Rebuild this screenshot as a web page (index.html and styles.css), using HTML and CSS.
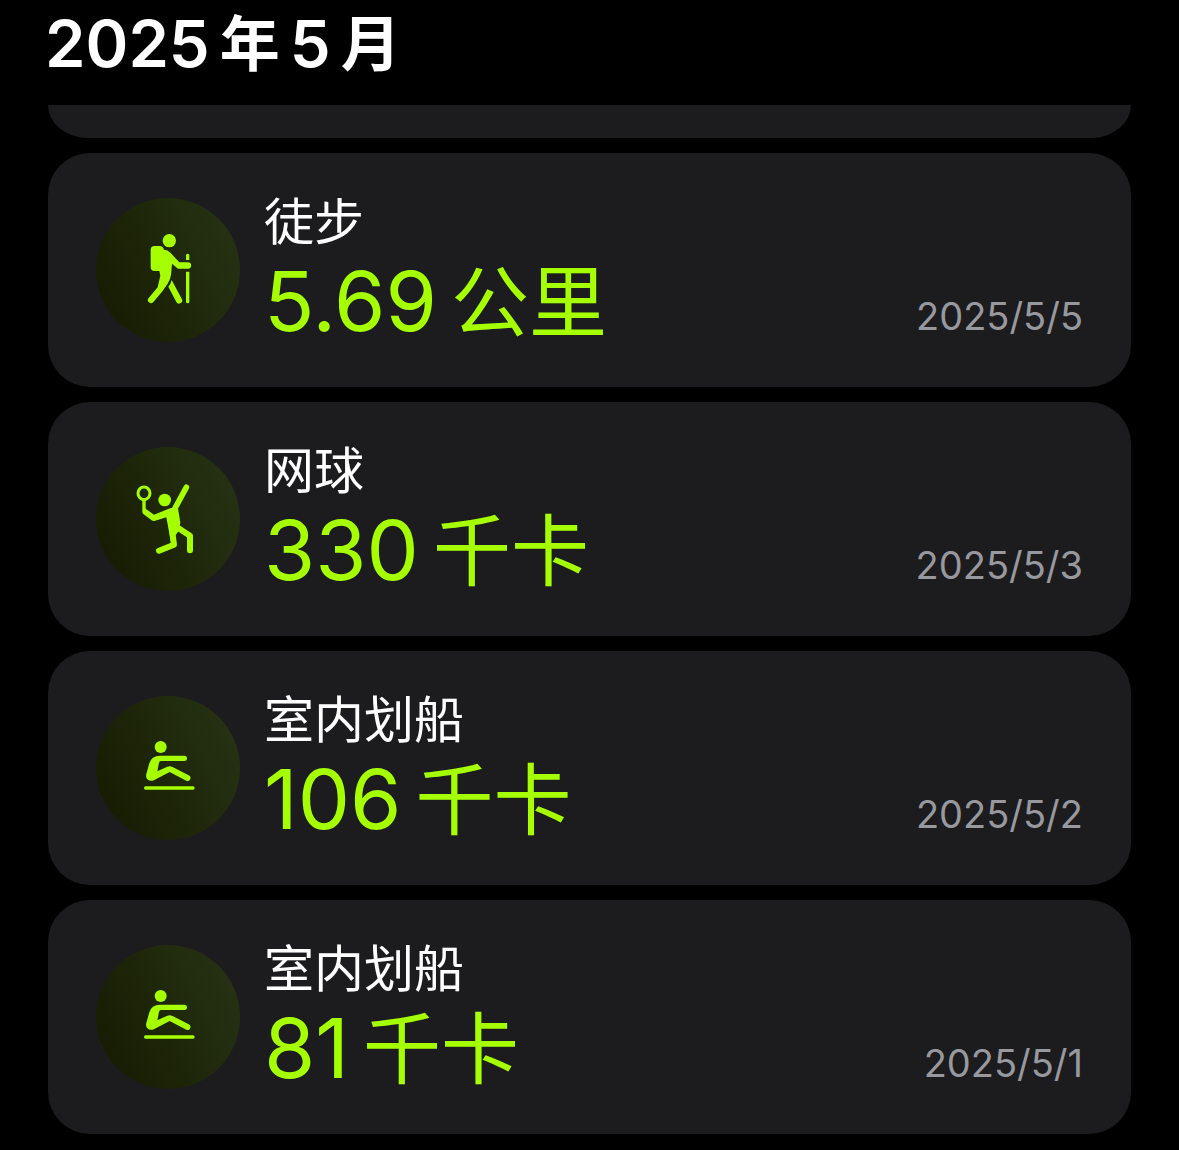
FILE: index.html
```html
<!DOCTYPE html>
<html lang="zh-CN">
<head>
<meta charset="utf-8">
<meta name="viewport" content="width=device-width, initial-scale=1">
<title>2025年5月</title>
<link rel="stylesheet" href="styles.css">
</head>
<body>
<svg class="sprite" aria-hidden="true">
  <symbol id="rower" viewBox="18 18 432 432">
    <circle cx="212" cy="171" r="18"/>
    <path d="M210 197H283A8 8 0 0 1 283 213H213Q208 213 207 218L202 244L232 230Q239 227 246 230L296 256A8 8 0 0 1 289 272L239 246L193 270Q181 276 172 268Q167 263 169 252L178 220Q184 198 210 197Z"/>
    <rect x="162" y="289" width="152" height="10" rx="5"/>
  </symbol>
</svg>
<header class="month">
  <h1 class="month-title"><span>2025</span><span>年</span><span>5</span><span>月</span></h1>
</header>
<main class="workouts">
  <div class="card card-clipped"></div>
  <article class="card">
    <div class="badge">
      <svg class="icon" viewBox="18 24 432 432" aria-hidden="true">
        <circle cx="238" cy="152" r="20"/>
        <path d="M194 168H209Q219 168 222 179Q233 179 242 189L268 217H294A9 9 0 0 1 294 236H264L246 221L243 255Q241 269 233 281L216 305L190 336A9 9 0 0 1 176 324L203 292L211 257L208 243H194Q182 243 182 231V180Q182 168 194 168Z"/>
        <path d="M245 270L275 326A9 9 0 0 1 259 336L235 290Q242 282 245 270Z"/>
        <path d="M288 210V196A5 5 0 0 1 298 196V210ZM288 245H298V335A5 5 0 0 1 288 335Z"/>
      </svg>
    </div>
    <div class="summary">
      <h2 class="name">徒步</h2>
      <p class="value"><span>5.69</span><span class="unit">公里</span></p>
    </div>
    <time class="date" datetime="2025-05-05">2025/5/5</time>
  </article>
  <article class="card">
    <div class="badge">
      <svg class="icon" viewBox="18 21 432 432" aria-hidden="true">
        <circle cx="224" cy="180" r="19"/>
        <ellipse class="line racket" cx="162" cy="160" rx="18" ry="19"/>
        <path d="M157 178H167V206L192 224L242 204L264 205L271 248L266 272L243 306L229 232L193 243Q189 244 185 241L160 222Q157 219 157 215Z"/>
        <path class="line" d="M253 208L256 203L289 142"/>
        <path class="line limb" d="M241 234L252 314L207 332M261 262L300 287V331"/>
      </svg>
    </div>
    <div class="summary">
      <h2 class="name">网球</h2>
      <p class="value"><span>330</span><span class="unit">千卡</span></p>
    </div>
    <time class="date" datetime="2025-05-03">2025/5/3</time>
  </article>
  <article class="card">
    <div class="badge">
      <svg class="icon" aria-hidden="true"><use href="#rower"/></svg>
    </div>
    <div class="summary">
      <h2 class="name">室内划船</h2>
      <p class="value"><span>106</span><span class="unit">千卡</span></p>
    </div>
    <time class="date" datetime="2025-05-02">2025/5/2</time>
  </article>
  <article class="card">
    <div class="badge">
      <svg class="icon" aria-hidden="true"><use href="#rower"/></svg>
    </div>
    <div class="summary">
      <h2 class="name">室内划船</h2>
      <p class="value"><span>81</span><span class="unit">千卡</span></p>
    </div>
    <time class="date" datetime="2025-05-01">2025/5/1</time>
  </article>
</main>
</body>
</html>
```
FILE: styles.css
```css
* {
  box-sizing: border-box;
  margin: 0;
}

body {
  background: #000;
  color: #fff;
  font-family: Inter, "Noto Sans CJK SC", sans-serif;
}

.sprite {
  display: none;
}

.month {
  padding: 0 45px 17px;
}

.month-title {
  display: flex;
  gap: 10px;
  font-size: 65px;
  font-weight: 600;
  line-height: 88px;
}

.month-title span:nth-child(even) {
  font-size: 60px;
  font-weight: 700;
}

.workouts {
  display: flex;
  flex-direction: column;
  gap: 15px;
  padding: 0 48px 16px;
}

.card {
  display: flex;
  align-items: center;
  gap: 24px;
  padding: 36px 48px;
  border-radius: 42px;
  background: #1c1c1e;
}

.card-clipped {
  padding: 0;
  height: 33px;
  border-radius: 0 0 40px 40px / 0 0 33px 33px;
}

.badge {
  flex: none;
  width: 144px;
  height: 144px;
  border-radius: 50%;
  background: linear-gradient(65deg, #171c02 10%, #263213 90%);
}

.icon {
  display: block;
  width: 100%;
  height: 100%;
  fill: #a6ff00;
}

.line {
  fill: none;
  stroke: #a6ff00;
  stroke-width: 17px;
  stroke-linecap: round;
  stroke-linejoin: round;
}

.racket {
  stroke-width: 9px;
}

.limb {
  stroke-width: 18px;
}

.summary {
  flex: 1;
  padding-top: 2px;
}

.name {
  font-size: 50px;
  font-weight: 400;
  line-height: 62px;
}

.value {
  display: flex;
  gap: 14px;
  color: #a6ff00;
  font-size: 83px;
  line-height: 96px;
}

.unit {
  padding-top: 2px;
  font-size: 78px;
}

.date {
  align-self: flex-end;
  padding-bottom: 11px;
  color: #98989f;
  font-size: 38px;
  line-height: 48px;
}
```
